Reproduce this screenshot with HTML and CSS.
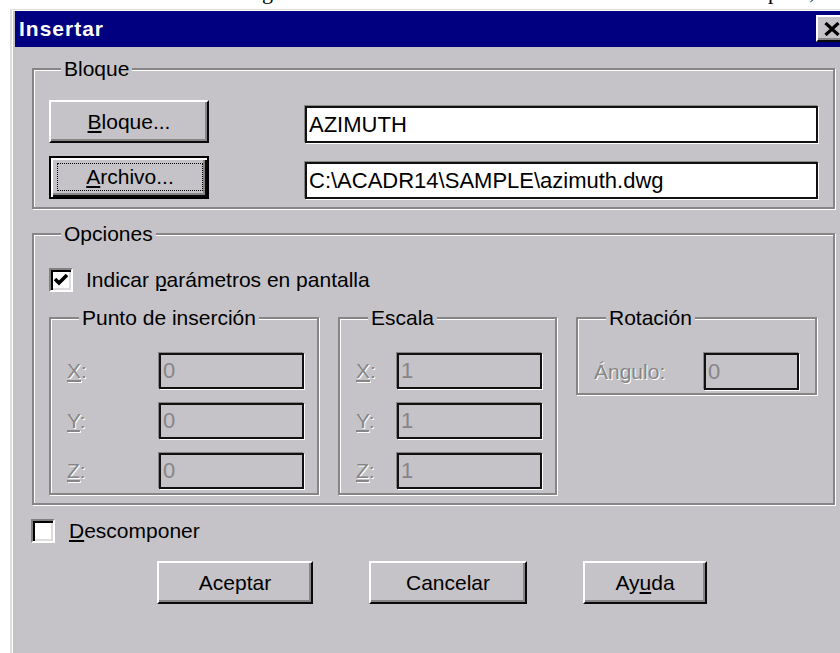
FILE: index.html
```html
<!DOCTYPE html>
<html lang="es">
<head>
<meta charset="utf-8">
<title>Insertar</title>
<link rel="stylesheet" href="styles.css">
</head>
<body>
  <!-- bottom edge of the document line sitting behind the dialog -->
  <div class="page-top">
    <div class="line"><span class="w1">g</span><span class="w2">p</span><span class="w3">,</span></div>
  </div>

  <div class="dialog">
    <div class="titlebar">
      <span class="title">Insertar</span>
      <button class="close" type="button" aria-label="Cerrar">
        <svg width="16" height="14" viewBox="0 0 16 14">
          <path d="M1.5 1 L14.5 13 M14.5 1 L1.5 13" stroke="#000" stroke-width="3.2" fill="none"/>
        </svg>
      </button>
    </div>

    <div class="content">
      <fieldset class="group bloque">
        <legend>Bloque</legend>
        <div class="file-row">
          <button class="btn pick" type="button"><u>B</u>loque...</button>
          <input class="field" type="text" value="AZIMUTH" readonly>
        </div>
        <div class="file-row">
          <button class="btn pick default" type="button"><span class="focus"><u>A</u>rchivo...</span></button>
          <input class="field" type="text" value="C:\ACADR14\SAMPLE\azimuth.dwg" readonly>
        </div>
      </fieldset>

      <fieldset class="group opciones">
        <legend>Opciones</legend>
        <label class="check">
          <span class="box">
            <svg width="16" height="14" viewBox="0 0 16 14">
              <polyline points="2,6 6,10 14,2" stroke="#000" stroke-width="3.6" fill="none"/>
            </svg>
          </span>
          <span>Indicar <u>p</u>arámetros en pantalla</span>
        </label>

        <div class="subgroups">
          <fieldset class="group sub punto">
            <legend>Punto de inserción</legend>
            <div class="row"><span class="lbl"><u>X</u>:</span><input class="field off" type="text" value="0" disabled></div>
            <div class="row"><span class="lbl"><u>Y</u>:</span><input class="field off" type="text" value="0" disabled></div>
            <div class="row"><span class="lbl"><u>Z</u>:</span><input class="field off" type="text" value="0" disabled></div>
          </fieldset>
          <fieldset class="group sub escala">
            <legend>Escala</legend>
            <div class="row"><span class="lbl"><u>X</u>:</span><input class="field off" type="text" value="1" disabled></div>
            <div class="row"><span class="lbl"><u>Y</u>:</span><input class="field off" type="text" value="1" disabled></div>
            <div class="row"><span class="lbl"><u>Z</u>:</span><input class="field off" type="text" value="1" disabled></div>
          </fieldset>
          <fieldset class="group sub rot">
            <legend>Rotación</legend>
            <div class="row"><span class="lbl">Ángulo:</span><input class="field off" type="text" value="0" disabled></div>
          </fieldset>
        </div>
      </fieldset>

      <label class="check descomponer">
        <span class="box"></span>
        <span><u>D</u>escomponer</span>
      </label>

      <div class="actions">
        <button class="btn ok" type="button">Aceptar</button>
        <button class="btn cancel" type="button">Cancelar</button>
        <button class="btn help" type="button">Ay<u>u</u>da</button>
      </div>
    </div>
  </div>
</body>
</html>
```

FILE: styles.css
```css
html, body {
  margin: 0;
  height: 100%;
  overflow: hidden;
  background: #fff;
}

body {
  font-family: "Liberation Sans", Arial, sans-serif;
  font-size: 21px;
  color: #000;
}

/* strip of the document page above the window */
.page-top {
  height: 9px;
  overflow: hidden;
  font-family: "Liberation Serif", "Times New Roman", serif;
  font-size: 22px;
  line-height: 22px;
}
.page-top .line {
  display: flex;
  margin-top: -19px;
}
.page-top .w1 { margin-left: 262px; }
.page-top .w2 { margin-left: 495px; }
.page-top .w3 { margin-left: 30px; }

/* window frame; runs on past the bottom of the view */
.dialog {
  margin-left: 10px;
  width: 837px;
  height: 642px;
  overflow: hidden;
  padding: 1px 3px 0;
  border-top: 1px solid #dedede;
  border-left: 2px solid #dedede;
  box-shadow: inset 1px 1px 0 #fff;
  background: #c5c3c7;
}

.titlebar {
  height: 36px;
  background: #000080;
  display: flex;
  justify-content: space-between;
  align-items: flex-start;
}
.title {
  color: #fff;
  font-weight: bold;
  letter-spacing: 1px;
  line-height: 36px;
  padding-left: 4px;
}
.close {
  margin: 4px 4px 0 0;
  width: 32px;
  height: 27px;
  box-sizing: border-box;
  padding: 0;
  background: #c5c3c7;
  border: 2px solid;
  border-color: #fff #0a0a0a #0a0a0a #fff;
  box-shadow: inset -2px -2px 0 #868686;
  display: flex;
  align-items: center;
  justify-content: center;
}

.content {
  padding: 10px 17px 0;
}

/* etched group boxes */
.group {
  margin: 0;
  min-width: 0;
  box-sizing: border-box;
  border: 2px solid #868686;
  box-shadow: inset 1px 1px 0 #fff, 1px 1px 0 #fff;
}
.group legend {
  padding: 0 3px;
  margin-left: 12px;
  line-height: 24px;
  background: #c5c3c7;
}

.bloque {
  padding: 19px 15px 8px;
}
.file-row {
  display: flex;
  align-items: flex-end;
  gap: 96px;
}
.file-row + .file-row {
  margin-top: 13px;
}

/* push buttons */
.btn {
  height: 43px;
  box-sizing: border-box;
  padding: 0;
  font: inherit;
  color: #000;
  background: #c5c3c7;
  border: 2px solid;
  border-color: #fff #0a0a0a #0a0a0a #fff;
  box-shadow: inset -2px -2px 0 #868686;
  display: flex;
  align-items: center;
  justify-content: center;
}
.btn.pick { width: 160px; flex: none; }
.btn.default {
  border-color: #000;
  box-shadow: inset 2px 2px 0 #fff, inset -2px -2px 0 #0a0a0a, inset -4px -4px 0 #868686;
  padding: 5px 4px 6px 6px;
  align-items: stretch;
}
.focus {
  flex: 1;
  border: 1px dotted #000;
  display: flex;
  align-items: center;
  justify-content: center;
}

/* edit fields */
.field {
  flex: 1;
  min-width: 0;
  height: 37px;
  box-sizing: border-box;
  margin: 0;
  padding: 0 2px;
  border: 2px solid #111;
  box-shadow: -1px -1px 0 #868686, 1px 1px 0 #fff;
  background: #fff;
  font-family: "Liberation Sans", Arial, sans-serif;
  font-size: 22px;
  color: #000;
  outline: none;
}
.field.off {
  flex: none;
  width: 145px;
  height: 36px;
  background: #c5c3c7;
  color: #868686;
  -webkit-text-fill-color: #868686;
  opacity: 1;
}

.opciones {
  margin-top: 13px;
  padding: 22px 15px 8px;
}

/* check boxes */
.check {
  display: flex;
  align-items: center;
  gap: 13px;
  height: 24px;
}
.box {
  width: 24px;
  height: 24px;
  flex: none;
  box-sizing: border-box;
  background: #fff;
  border: 2px solid;
  border-color: #808080 #fff #fff #808080;
  box-shadow: inset 2px 2px 0 #000, inset -2px -2px 0 #dcdcdc;
  display: flex;
  align-items: center;
  justify-content: center;
}

.subgroups {
  display: flex;
  align-items: flex-start;
  gap: 19px;
  margin-top: 14px;
}
.sub {
  padding: 23px 13px 4px 16px;
}
.punto { width: 270px; }
.escala { width: 219px; }
.rot { width: 241px; padding-right: 16px; padding-bottom: 3px; }
.rot .field.off { width: 95px; height: 37px; }

.row {
  display: flex;
  align-items: center;
}
.row + .row {
  margin-top: 14px;
}
.lbl {
  flex: 1;
  color: #868686;
  text-shadow: 1px 1px 0 #fff;
}

.descomponer {
  margin: 14px 0 0 -1px;
  gap: 14px;
}

.actions {
  display: flex;
  gap: 56px;
  margin: 18px 0 0 125px;
}
.ok { width: 156px; }
.cancel { width: 158px; }
.help { width: 124px; }
```
